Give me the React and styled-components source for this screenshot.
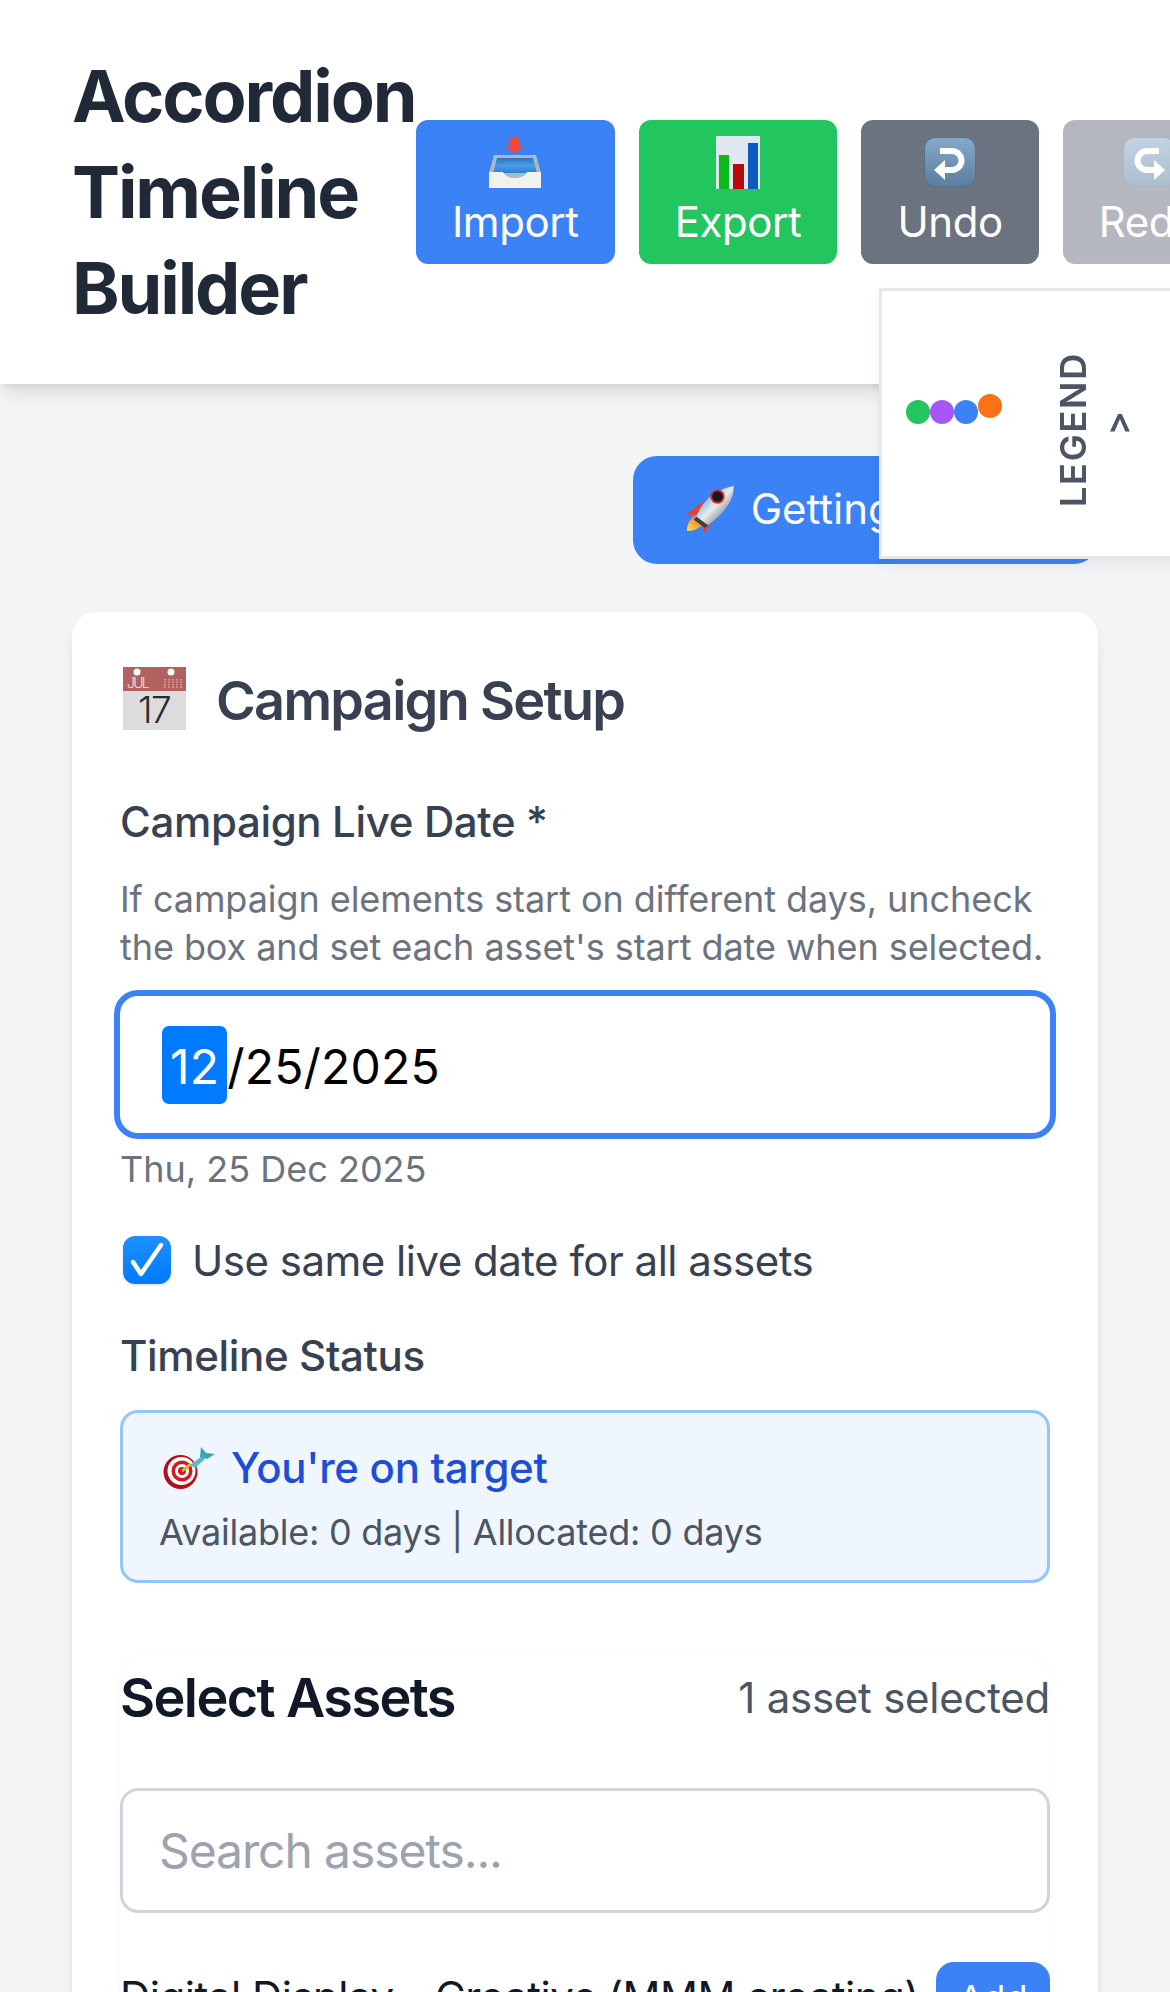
import React from "react";
import styled, { createGlobalStyle } from "styled-components";

const GlobalStyle = createGlobalStyle`
  * { box-sizing: border-box; }
  html, body { margin: 0; padding: 0; height: 1992px; overflow: hidden; background: #f3f4f6; }
  body { font-family: Inter, "Liberation Sans", sans-serif; color: #111827; }
`;

const Header = styled.header`
  display: flex;
  align-items: center;
  height: 384px;
  padding: 48px 72px;
  background: #fff;
  box-shadow: 0 12px 18px -4px rgba(0, 0, 0, 0.1), 0 4px 8px -2px rgba(0, 0, 0, 0.08);
`;

const Title = styled.h1`
  margin: 0;
  flex: 0 0 344px;
  min-width: 0;
  font-size: 72px;
  line-height: 96px;
  font-weight: 700;
  letter-spacing: -2.1px;
  color: #1f2937;
`;

const Toolbar = styled.div`
  display: flex;
  flex: none;
  gap: 24px;
`;

const ToolButton = styled.button`
  display: flex;
  flex-direction: column;
  align-items: center;
  height: 144px;
  padding: 12px 36px;
  border: 0;
  border-radius: 12px;
  font-family: inherit;
  font-size: 42px;
  line-height: 60px;
  letter-spacing: -0.42px;
  color: #fff;
  background: ${(p) => p.$bg};
  opacity: ${(p) => (p.$faded ? 0.5 : 1)};
`;

const EmojiSlot = styled.span`
  display: flex;
  align-items: center;
  justify-content: center;
  height: 60px;
`;

const Legend = styled.aside`
  position: fixed;
  top: 288px;
  left: 879px;
  width: 330px;
  height: 271px;
  display: flex;
  align-items: center;
  padding-left: 24px;
  background: #fff;
  border: 3px solid #e5e7eb;
  box-shadow: 0 6px 12px rgba(0, 0, 0, 0.06);
`;

const Dots = styled.div`
  display: flex;
  margin-bottom: 23px;
  margin-right: 44px;
`;

const Dot = styled.span`
  width: 24px;
  height: 24px;
  border-radius: 50%;
  background: ${(p) => p.$color};
  transform: translateY(${(p) => (p.$raised ? "-6px" : "0")});
`;

const LegendLabel = styled.span`
  margin-top: 12px;
  writing-mode: vertical-rl;
  transform: rotate(180deg);
  font-size: 36px;
  line-height: 54px;
  font-weight: 600;
  letter-spacing: 1.8px;
  color: #4b5563;
`;

const LegendCaret = styled(LegendLabel)`
  margin-top: 0;
  margin-left: -10px;
  letter-spacing: 0;
`;

const Main = styled.main`
  padding: 72px 72px 0;
`;

const GuideRow = styled.div`
  display: flex;
  justify-content: flex-end;
  margin-bottom: 48px;
`;

const GuideButton = styled.button`
  display: flex;
  align-items: center;
  gap: 16px;
  width: 465px;
  height: 108px;
  padding: 0 48px 3px 52px;
  border: 0;
  border-radius: 24px;
  font-family: inherit;
  font-size: 42px;
  color: #fff;
  background: #3b82f6;
  white-space: nowrap;
`;

const Card = styled.section`
  padding: 48px;
  height: 1500px;
  background: #fff;
  border-radius: 24px;
  box-shadow: 0 12px 18px -3px rgba(0, 0, 0, 0.08), 0 4px 10px -4px rgba(0, 0, 0, 0.08);
`;

const CardHeading = styled.h2`
  display: flex;
  align-items: center;
  gap: 30px;
  margin: 0 0 48px;
  padding-left: 3px;
  font-size: 54px;
  line-height: 82px;
  font-weight: 600;
  letter-spacing: -1.7px;
  color: #374151;
`;

const FieldLabel = styled.div`
  font-size: 42px;
  line-height: 60px;
  font-weight: 500;
  letter-spacing: -0.35px;
  color: #374151;
  margin-top: ${(p) => p.$top || 0}px;
  margin-bottom: ${(p) => p.$gap || 0}px;
`;

const HelpText = styled.p`
  margin: 0 0 25px;
  font-size: 36px;
  line-height: 48px;
  letter-spacing: -0.07px;
  color: #6b7280;
`;

const DateField = styled.div`
  display: flex;
  align-items: center;
  height: 137px;
  padding: 4px 42px 0;
  border-radius: 18px;
  background: #fff;
  box-shadow: 0 0 0 6px #3b82f6;
  font-size: 48px;
  letter-spacing: 0.2px;
  color: #000;
`;

const DateSegment = styled.span`
  display: flex;
  align-items: center;
  height: 78px;
  margin-top: -4px;
  padding: 4px 8px 0;
  border-radius: 7px;
  background: #007aff;
  color: #fff;
`;

const DateCaption = styled.div`
  margin: 12px 0 37px;
  font-size: 36px;
  line-height: 48px;
  color: #6b7280;
`;

const CheckRow = styled.div`
  display: flex;
  align-items: center;
  gap: 21px;
  height: 60px;
  margin-bottom: 36px;
  padding-left: 3px;
  font-size: 42px;
  letter-spacing: -0.5px;
  color: #374151;
`;

const CheckBox = styled.span`
  display: flex;
  align-items: center;
  justify-content: center;
  width: 48px;
  height: 48px;
  border-radius: 12px;
  background: linear-gradient(#1e90ff, #007aff);
  box-shadow: 0 1px 3px rgba(0, 0, 0, 0.15);
`;

const StatusBox = styled.div`
  height: 173px;
  margin-top: 24px;
  padding: 31px 36px 0 40px;
  background: #eff6ff;
  border: 3px solid #93c5fd;
  border-radius: 18px;
`;

const StatusTitle = styled.div`
  display: flex;
  align-items: center;
  gap: 16px;
  font-size: 42px;
  line-height: 48px;
  font-weight: 500;
  letter-spacing: -0.3px;
  color: #1d4ed8;
`;

const StatusDetail = styled.div`
  margin: 16px 0 0 -4px;
  font-size: 36px;
  line-height: 48px;
  letter-spacing: -0.24px;
  color: #4b5563;
`;

const AssetsPanel = styled.div`
  margin-top: 72px;
  border-radius: 24px 24px 0 0;
  box-shadow: 0 0 0 1px #f9fafb;
`;

const AssetsHead = styled.div`
  display: flex;
  justify-content: space-between;
  align-items: center;
  height: 84px;
  margin-bottom: 49px;
`;

const AssetsTitle = styled.h3`
  margin: 0;
  font-size: 54px;
  font-weight: 600;
  letter-spacing: -1.6px;
  color: #111827;
`;

const AssetsCount = styled.span`
  font-size: 42px;
  letter-spacing: -0.25px;
  color: #4b5563;
`;

const SearchInput = styled.input`
  display: block;
  width: 100%;
  height: 125px;
  padding: 0 36px;
  border: 3px solid #d1d5db;
  border-radius: 18px;
  outline: none;
  font-family: inherit;
  font-size: 48px;
  letter-spacing: -1.1px;
  color: #111827;
  &::placeholder { color: #9ca3af; opacity: 1; }
`;

const AssetRow = styled.div`
  display: flex;
  justify-content: space-between;
  align-items: flex-start;
  margin-top: 49px;
`;

const AssetName = styled.span`
  margin-top: 5px;
  font-size: 42px;
  line-height: 60px;
  letter-spacing: -0.5px;
  white-space: nowrap;
  color: #111827;
`;

const AddButton = styled.button`
  flex: none;
  width: 114px;
  height: 72px;
  border: 0;
  border-radius: 18px;
  background: #3b82f6;
  color: #fff;
  font-family: inherit;
  font-size: 36px;
`;

const InboxIcon = () => (
  <svg width="52" height="51" viewBox="0 0 52 51">
    <defs>
      <linearGradient id="trayBlue" x1="0" y1="0" x2="0" y2="1">
        <stop offset="0" stopColor="#2a74bd" />
        <stop offset="0.5" stopColor="#4a9ce6" />
        <stop offset="1" stopColor="#2d80d2" />
      </linearGradient>
    </defs>
    <path d="M20 0h11v8h5L25.5 17 15.5 8H20z" fill="#f0483e" />
    <path d="M5 18h42l5 18v15H0V36z" fill="#aab9c6" />
    <path d="M8 21h36l4 15H4z" fill="url(#trayBlue)" />
    <path d="M0 35h14c3 8 21 8 24 0h14v16H0z" fill="#f1f1ee" />
  </svg>
);

const ChartIcon = () => (
  <svg width="44" height="53" viewBox="0 0 44 53">
    <rect width="44" height="53" fill="#dfe7ef" />
    <rect x="3" y="19" width="10" height="34" fill="#0cb81c" />
    <rect x="17" y="28" width="11" height="25" fill="#b90a0a" />
    <rect x="32" y="7" width="10" height="46" fill="#0b5cc0" />
  </svg>
);

const ArrowKey = ({ flip, id }) => (
  <svg width="52" height="50" viewBox="0 0 52 50" style={flip ? { transform: "scaleX(-1)" } : undefined}>
    <defs>
      <linearGradient id={id} x1="0" y1="0" x2="0" y2="1">
        <stop offset="0" stopColor="#86a9c9" />
        <stop offset="1" stopColor="#5c7e9e" />
      </linearGradient>
    </defs>
    <rect x="0.5" y="0.5" width="51" height="49" rx="11" fill={`url(#${id})`} stroke="#56708a" />
    <path d="M16 14h12a9.5 9.5 0 0 1 0 19H19" fill="none" stroke="#fff" strokeWidth="6" />
    <path d="M10 33l11-10v20z" fill="#fff" />
  </svg>
);

const RocketIcon = () => (
  <svg width="52" height="50" viewBox="0 0 52 50">
    <defs>
      <linearGradient id="rocketBody" x1="0.1" y1="0.2" x2="0.8" y2="0.9">
        <stop offset="0" stopColor="#5d9fd0" />
        <stop offset="0.5" stopColor="#e8ecee" />
        <stop offset="1" stopColor="#6f7276" />
      </linearGradient>
      <linearGradient id="rocketFlame" x1="0" y1="1" x2="1" y2="0">
        <stop offset="0" stopColor="#fbe14b" />
        <stop offset="1" stopColor="#ee5a1c" />
      </linearGradient>
    </defs>
    <path d="M21 16L0 32l15-2z" fill="#ef3d20" />
    <path d="M34 31L20 50l-1-12z" fill="#ef3d20" />
    <path d="M2 48c0-8 4-14 10-17l9 8c-4 5-11 9-19 9z" fill="url(#rocketFlame)" />
    <path d="M12 33C17 17 33 4 51 1c0 17-12 30-27 41z" fill="url(#rocketBody)" />
    <path d="M12 33l12 9-3 3-12-9z" fill="#3a4046" />
    <circle cx="34" cy="12" r="6.5" fill="#15191c" stroke="#e2241f" strokeWidth="2" />
  </svg>
);

const calendarTicks = [42, 46, 50, 54, 58];

const CalendarIcon = () => (
  <svg width="63" height="63" viewBox="0 0 63 63" style={{ marginTop: -5 }}>
    <rect width="63" height="63" fill="#dcdcdc" />
    <rect width="63" height="24" fill="#b26060" />
    <circle cx="14" cy="5" r="3.5" fill="#fff" />
    <circle cx="48" cy="5" r="3.5" fill="#fff" />
    {calendarTicks.map((x) => (
      <path key={x} d={`M${x} 12v9`} stroke="#d9a9a9" strokeWidth="1.5" strokeDasharray="1.5 1" />
    ))}
    <text x="4" y="21" fontFamily="Inter, sans-serif" fontSize="14" fontWeight="300" fill="#f5e4e4">JUL</text>
    <text x="31" y="56" textAnchor="middle" fontFamily="Inter, sans-serif" fontSize="37" fontWeight="300" fill="#2b2b2b">17</text>
  </svg>
);

const TargetIcon = () => (
  <svg width="52" height="42" viewBox="0 0 52 42">
    <circle cx="17.5" cy="25" r="17" fill="#b30f14" />
    <circle cx="18.5" cy="24" r="14" fill="#fff" />
    <circle cx="19" cy="24" r="10.5" fill="#d3181d" />
    <circle cx="19" cy="24" r="7" fill="#fff" />
    <circle cx="19" cy="24" r="4" fill="#d3181d" />
    <path d="M19 24l9-7" stroke="#d9b23c" strokeWidth="3" />
    <path d="M27 18L39 9l3 3-10 9z" fill="#58bccb" />
    <path d="M37 10L38 0l5 6 9 1-8 5z" fill="#35a5b8" />
  </svg>
);

const CheckMark = () => (
  <svg width="36" height="36" viewBox="0 0 36 36">
    <path d="M4 20l8 12L32 3" fill="none" stroke="#fff" strokeWidth="4.5" strokeLinecap="round" strokeLinejoin="round" />
  </svg>
);

const tools = [
  { label: "Import", bg: "#3b82f6", icon: <InboxIcon /> },
  { label: "Export", bg: "#22c55e", icon: <ChartIcon /> },
  { label: "Undo", bg: "#6b7280", icon: <ArrowKey id="undoKey" /> },
  { label: "Redo", bg: "#6b7280", icon: <ArrowKey id="redoKey" flip />, faded: true },
];

const legendDots = ["#22c55e", "#a855f7", "#3b82f6", "#f97316"];

export default function App() {
  return (
    <>
      <GlobalStyle />
      <Header>
        <Title>Accordion Timeline Builder</Title>
        <Toolbar>
          {tools.map((tool) => (
            <ToolButton key={tool.label} $bg={tool.bg} $faded={tool.faded}>
              <EmojiSlot>{tool.icon}</EmojiSlot>
              {tool.label}
            </ToolButton>
          ))}
        </Toolbar>
      </Header>

      <Legend>
        <Dots>
          {legendDots.map((color, i) => (
            <Dot key={color} $color={color} $raised={i === 3} />
          ))}
        </Dots>
        <LegendLabel>LEGEND</LegendLabel>
        <LegendCaret>&gt;</LegendCaret>
      </Legend>

      <Main>
        <GuideRow>
          <GuideButton>
            <RocketIcon />
            Getting Started
          </GuideButton>
        </GuideRow>

        <Card>
          <CardHeading>
            <CalendarIcon />
            Campaign Setup
          </CardHeading>

          <FieldLabel $top={50} $gap={23}>Campaign Live Date *</FieldLabel>
          <HelpText>
            If campaign elements start on different days, uncheck the box and set each asset's start date when selected.
          </HelpText>
          <DateField>
            <DateSegment>12</DateSegment>/25/2025
          </DateField>
          <DateCaption>Thu, 25 Dec 2025</DateCaption>

          <CheckRow>
            <CheckBox>
              <CheckMark />
            </CheckBox>
            Use same live date for all assets
          </CheckRow>

          <FieldLabel>Timeline Status</FieldLabel>
          <StatusBox>
            <StatusTitle>
              <TargetIcon />
              You're on target
            </StatusTitle>
            <StatusDetail>Available: 0 days | Allocated: 0 days</StatusDetail>
          </StatusBox>

          <AssetsPanel>
            <AssetsHead>
              <AssetsTitle>Select Assets</AssetsTitle>
              <AssetsCount>1 asset selected</AssetsCount>
            </AssetsHead>
            <SearchInput placeholder="Search assets..." />
            <AssetRow>
              <AssetName>Digital Display - Creative (MMM creating)</AssetName>
              <AddButton>Add</AddButton>
            </AssetRow>
          </AssetsPanel>
        </Card>
      </Main>
    </>
  );
}
